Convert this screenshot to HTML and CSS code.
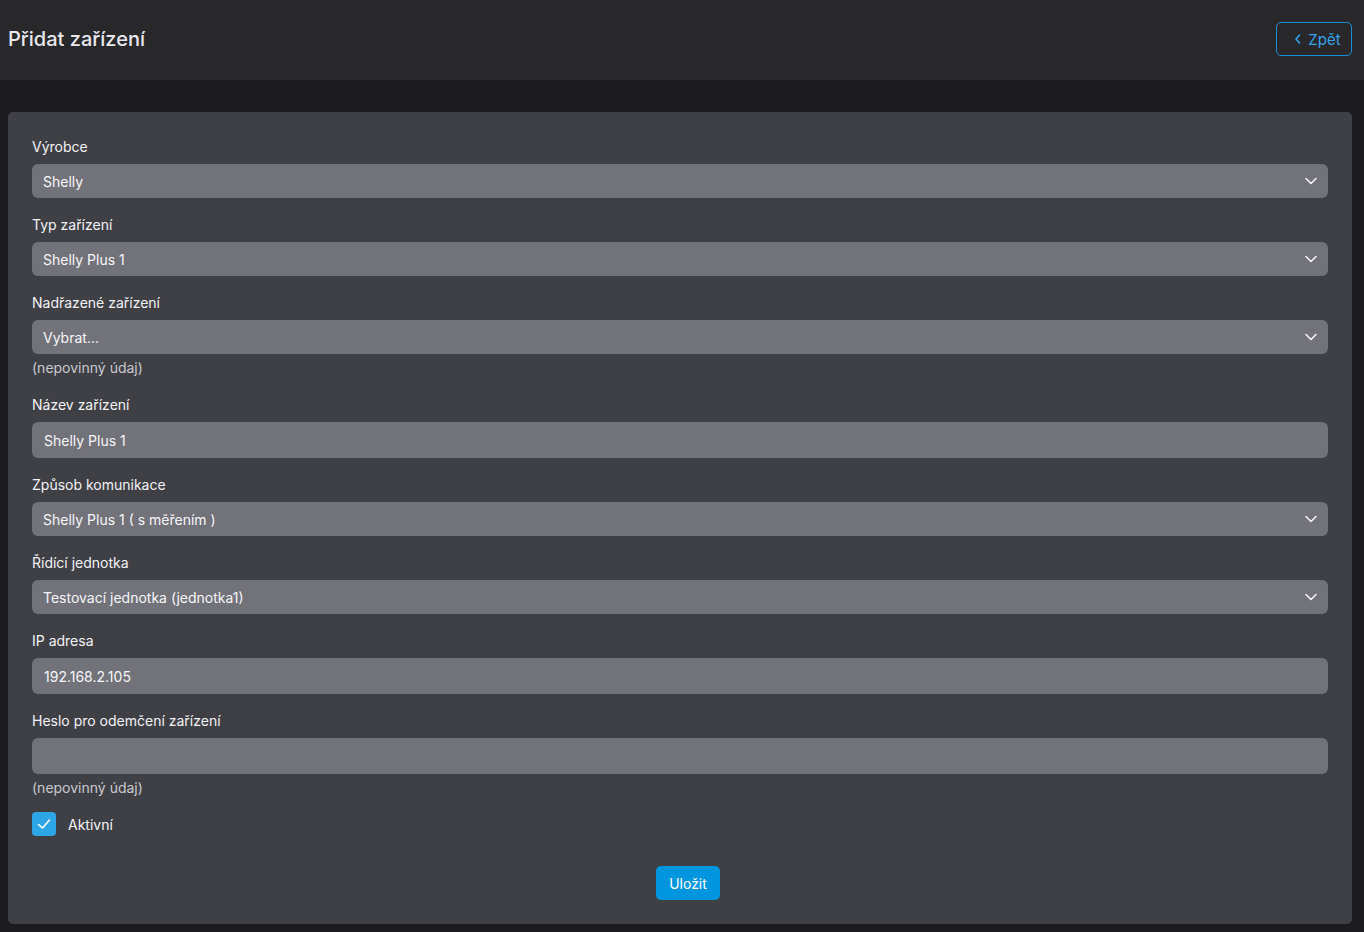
FILE: index.html
```html
<!DOCTYPE html>
<html lang="cs">
<head>
<meta charset="utf-8">
<title>Přidat zařízení</title>
<link rel="stylesheet" href="styles.css">
</head>
<body>
<header class="topbar">
  <h1 class="title">Přidat zařízení</h1>
  <button class="back-btn" type="button">
    <svg class="back-icon" viewBox="0 0 10 12" width="10" height="12"><path d="M6.5 2 L3 6 L6.5 10" fill="none" stroke="currentColor" stroke-width="1.6" stroke-linecap="round" stroke-linejoin="round"/></svg>
    <span>Zpět</span>
  </button>
</header>
<main class="content">
  <form class="card">
    <div class="group">
      <label class="label">Výrobce</label>
      <div class="select"><span>Shelly</span><svg class="chev" viewBox="0 0 12 8" width="12" height="8"><path d="M1 1.5 L6 6.5 L11 1.5" fill="none" stroke="currentColor" stroke-width="1.6" stroke-linecap="round" stroke-linejoin="round"/></svg></div>
    </div>
    <div class="group">
      <label class="label">Typ zařízení</label>
      <div class="select"><span>Shelly Plus 1</span><svg class="chev" viewBox="0 0 12 8" width="12" height="8"><path d="M1 1.5 L6 6.5 L11 1.5" fill="none" stroke="currentColor" stroke-width="1.6" stroke-linecap="round" stroke-linejoin="round"/></svg></div>
    </div>
    <div class="group">
      <label class="label">Nadřazené zařízení</label>
      <div class="select"><span>Vybrat...</span><svg class="chev" viewBox="0 0 12 8" width="12" height="8"><path d="M1 1.5 L6 6.5 L11 1.5" fill="none" stroke="currentColor" stroke-width="1.6" stroke-linecap="round" stroke-linejoin="round"/></svg></div>
      <div class="hint">(nepovinný údaj)</div>
    </div>
    <div class="group">
      <label class="label">Název zařízení</label>
      <div class="input">Shelly Plus 1</div>
    </div>
    <div class="group">
      <label class="label">Způsob komunikace</label>
      <div class="select"><span>Shelly Plus 1 ( s měřením )</span><svg class="chev" viewBox="0 0 12 8" width="12" height="8"><path d="M1 1.5 L6 6.5 L11 1.5" fill="none" stroke="currentColor" stroke-width="1.6" stroke-linecap="round" stroke-linejoin="round"/></svg></div>
    </div>
    <div class="group">
      <label class="label">Řídící jednotka</label>
      <div class="select"><span>Testovací jednotka (jednotka1)</span><svg class="chev" viewBox="0 0 12 8" width="12" height="8"><path d="M1 1.5 L6 6.5 L11 1.5" fill="none" stroke="currentColor" stroke-width="1.6" stroke-linecap="round" stroke-linejoin="round"/></svg></div>
    </div>
    <div class="group">
      <label class="label">IP adresa</label>
      <div class="input">192.168.2.105</div>
    </div>
    <div class="group group-last">
      <label class="label">Heslo pro odemčení zařízení</label>
      <div class="input"></div>
      <div class="hint">(nepovinný údaj)</div>
    </div>
    <div class="check-row">
      <span class="checkbox"><svg viewBox="0 0 24 24" width="24" height="24"><path d="M6.5 12.5 L10.5 16 L17.5 8" fill="none" stroke="#fff" stroke-width="1.6" stroke-linecap="round" stroke-linejoin="round"/></svg></span>
      <span class="check-label">Aktivní</span>
    </div>
    <div class="actions">
      <button class="save-btn" type="button">Uložit</button>
    </div>
  </form>
</main>
</body>
</html>
```
FILE: styles.css
```css
* { box-sizing: border-box; }
html, body {
  margin: 0;
  padding: 0;
  background: #1c1c1f;
  font-family: Inter, "Noto Sans", "Liberation Sans", sans-serif;
  color: #f4f4f6;
  font-size: 14px;
}
.topbar {
  height: 80px;
  background: #28282b;
  display: flex;
  align-items: center;
  justify-content: space-between;
  padding: 0 12px 0 8px;
}
.title {
  margin: 0;
  font-size: 20px;
  font-weight: 500;
  color: #e9e9ee;
  line-height: 24px;
  position: relative;
  top: -1px;
}
.back-btn {
  height: 34px;
  width: 76px;
  border: 1px solid #1b8fd6;
  border-radius: 5px;
  background: transparent;
  color: #35a2e8;
  font-family: inherit;
  font-size: 15px;
  display: flex;
  align-items: center;
  justify-content: center;
  gap: 5px;
  padding: 0 0 0 6px;
  position: relative;
  top: -1px;
}
.back-icon { display: block; }
.content {
  padding: 32px 12px 8px 8px;
}
.card {
  background: #3f4046;
  border-radius: 5px;
  padding: 24px 24px 24px 24px;
  display: flex;
  flex-direction: column;
}
.group {
  display: flex;
  flex-direction: column;
  margin-bottom: 16px;
}
.group-last { margin-bottom: 14px; }
.label {
  line-height: 20px;
  height: 21px;
  padding-top: 1px;
  margin-bottom: 7px;
  color: #f2f2f5;
  font-size: 14px;
}
.select {
  height: 34px;
  background: #72727a;
  border-radius: 6px;
  display: flex;
  align-items: center;
  justify-content: space-between;
  padding: 0 11px 0 11px;
  color: #f6f6f8;
}
.chev { color: #f4f4f6; display: block; }
.input {
  height: 36px;
  background: #72727a;
  border-radius: 6px;
  display: flex;
  align-items: center;
  padding: 0 12px;
  color: #f6f6f8;
}
.hint {
  margin-top: 4px;
  line-height: 20px;
  color: #c8c9d0;
}
.check-row {
  display: flex;
  align-items: center;
  gap: 12px;
  height: 24px;
}
.checkbox {
  width: 24px;
  height: 24px;
  border-radius: 4px;
  background: #2ea6e5;
  display: block;
}
.checkbox svg { display: block; }
.check-label { color: #f4f4f6; }
.actions {
  display: flex;
  justify-content: center;
  margin-top: 30px;
  padding-left: 16px;
}
.save-btn {
  height: 34px;
  width: 64px;
  border: none;
  border-radius: 5px;
  background: #0096df;
  color: #fff;
  font-family: inherit;
  font-size: 14px;
  padding: 0;
}
```
